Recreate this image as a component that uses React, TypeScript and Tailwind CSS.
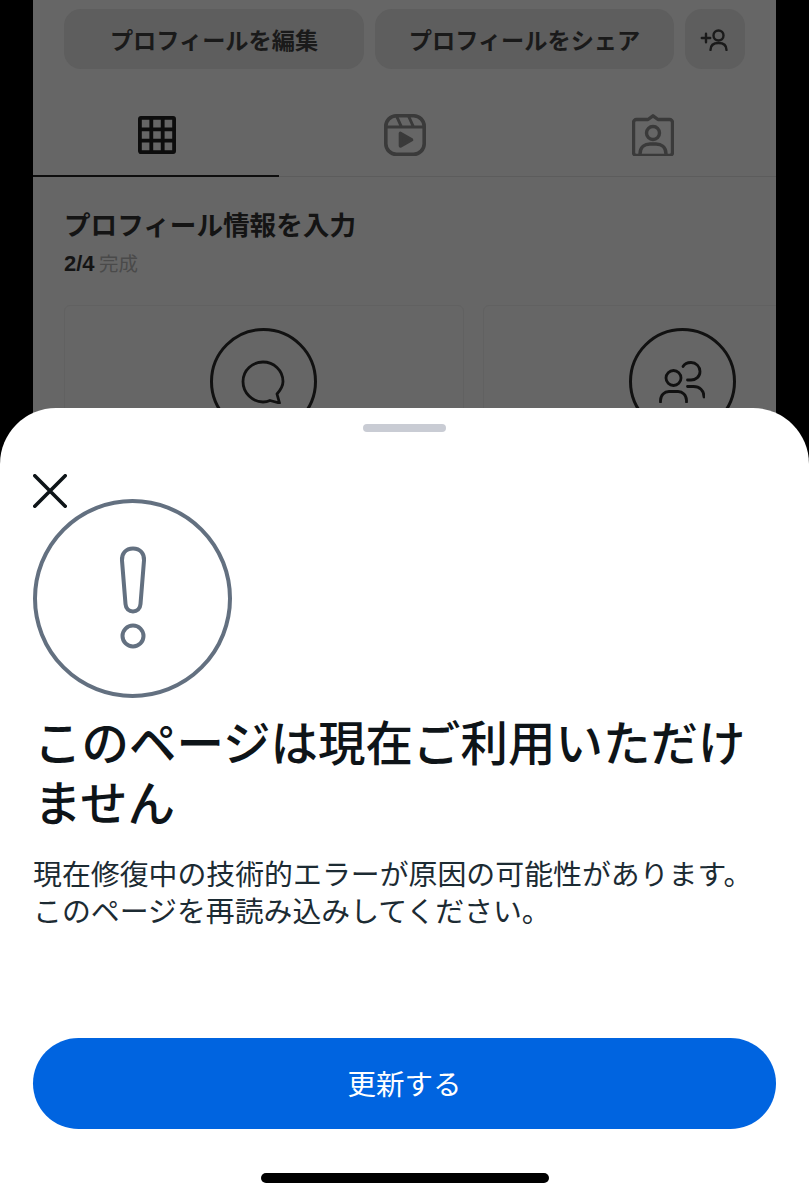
import React from 'react';

const jp = '[font-family:"Noto_Sans_CJK_JP","Liberation_Sans",sans-serif]';

const GridIcon = () => (
  <svg width="38" height="38" viewBox="0 0 38 38" fill="none" stroke="#0d0d0d" strokeWidth="3.8">
    <rect x="1.900" y="1.900" width="34.200" height="34.200" rx="1" />
    <path d="M13.300 1.900v34.200M24.700 1.900v34.200M1.900 13.300h34.200M1.900 24.700h34.200" />
  </svg>
);

const ReelIcon = () => (
  <svg width="42" height="42" viewBox="0 0 42 42" fill="none" stroke="#3a3a3a" strokeWidth="3.6" strokeLinejoin="round">
    <rect x="1.800" y="1.800" width="38.400" height="38.400" rx="10.500" />
    <path d="M2 13h38M12.500 2l5 11M24.500 2l5 11" strokeWidth="3" />
    <path d="M16.500 19.500v12.500l11-6.200z" fill="#3a3a3a" />
  </svg>
);

const TagIcon = () => (
  <svg width="42" height="42" viewBox="0 0 42 42" fill="none" stroke="#3a3a3a" strokeWidth="3.400" strokeLinejoin="round" strokeLinecap="round">
    <path d="M4.500 5.500h11.500L21 1.800l5 3.700h11.500a3 3 0 0 1 3 3v30a3 3 0 0 1-3 3h-33a3 3 0 0 1-3-3v-30a3 3 0 0 1 3-3z" />
    <circle cx="21" cy="19" r="6.500" />
    <path d="M8 40c0-7 5-10 10-10h6c5 0 10 3 10 10" />
  </svg>
);

const AddPersonIcon = () => (
  <svg width="30" height="24" viewBox="0 0 30 24" fill="none" stroke="#1a1a1a" strokeWidth="2.400" strokeLinecap="round">
    <path d="M1.800 11h8.400M6 6.800v8.400" />
    <circle cx="18.500" cy="8.500" r="5" />
    <path d="M10.500 23c0-4.500 3-7 8-7s8 2.500 8 7" />
  </svg>
);

const ChatIcon = () => (
  <svg width="44" height="44" viewBox="0 0 44 44" fill="none" stroke="#111" strokeWidth="2.800" strokeLinejoin="round">
    <path d="M22 2C11.500 2 2 10 2 21.500 2 33 11.500 42 22 42c3 0 5.500-.8 7-1.500l9.500 2.500-2.500-9C39.500 30 42 26 42 21.500 42 10 32.500 2 22 2z" />
  </svg>
);

const PeopleIcon = () => (
  <svg width="46" height="42" viewBox="0 0 46 42" fill="none" stroke="#111" strokeWidth="2.800" strokeLinecap="round">
    <circle cx="14.500" cy="17" r="7.500" />
    <path d="M1.500 41v-1.500c0-5.500 4-9 8.500-9h9c4.500 0 8.500 3.500 8.500 9V41" />
    <path d="M24 5.500C26 2 29 1.500 32 1.500c5 0 9 4 9 9s-4 8.500-9 8.500h-3.500" />
    <path d="M28.500 25.500h6c6 0 10.500 4 10.500 10.500" />
  </svg>
);

const CloseIcon = () => (
  <svg width="34" height="34" viewBox="0 0 34 34" fill="none" stroke="#0e1418" strokeWidth="3.600" strokeLinecap="round">
    <path d="M1.800 1.800l30.400 30.400M32.200 1.800L1.800 32.200" />
  </svg>
);

const AlertIcon = () => (
  <svg width="200" height="200" viewBox="0 0 200 200" fill="none" stroke="#637080" strokeWidth="4">
    <circle cx="99.500" cy="99.500" r="97.500" />
    <path d="M100 49.500c7.500 0 11.500 5.500 11 12l-3.500 43.500c-.4 5-3.500 7.500-7.500 7.500s-7.100-2.500-7.500-7.500l-3.500-43.500c-.5-6.500 3.500-12 11-12z" />
    <circle cx="100" cy="137" r="10.500" />
  </svg>
);

const ActionButton = ({ children, className }: { children: React.ReactNode; className: string }) => (
  <div className={`h-[60px] rounded-[17px] bg-[#5e5e5e] flex items-center justify-center text-[23.200px] font-bold text-[#1a1a1a] ${className}`}>
    {children}
  </div>
);

const TaskCard = ({ icon, className }: { icon: React.ReactNode; className: string }) => (
  <div className={`h-[200px] shrink-0 rounded-t-[6px] border border-[#616161] pt-[22px] pr-[2px] flex justify-center ${className}`}>
    <div className="w-[107px] h-[107px] rounded-full border-[3px] border-[#111] flex items-center justify-center">
      {icon}
    </div>
  </div>
);

export default function App() {
  return (
    <div className={`relative w-[809px] h-[1200px] overflow-hidden bg-black ${jp}`}>
      {/* dimmed profile page behind the sheet */}
      <div className="mx-[33px] w-[743px] h-[1200px] bg-[#666666] overflow-hidden">
        <div className="flex gap-[11px] pl-[31px] pt-[9px]">
          <ActionButton className="w-[300px]">プロフィールを編集</ActionButton>
          <ActionButton className="w-[299px]">プロフィールをシェア</ActionButton>
          <ActionButton className="w-[60px]"><AddPersonIcon /></ActionButton>
        </div>

        <div className="flex h-[108px] border-b border-[#5c5c5c]">
          <div className="relative w-[246px] flex items-center justify-center pl-[2px] pt-[24px]">
            <GridIcon />
            <div className="absolute left-0 right-0 -bottom-px h-[2px] bg-[#0d0d0d]" />
          </div>
          <div className="w-[250px] flex items-center justify-center pl-[2px] pt-[24px]"><ReelIcon /></div>
          <div className="w-[247px] flex items-center justify-center pt-[24px]"><TagIcon /></div>
        </div>

        <div className="pl-[31px] pt-[29px]">
          <h2 className="text-[26.600px] leading-[36px] font-bold text-[#141414]">プロフィール情報を入力</h2>
          <p className="mt-[8px] text-[19.500px] leading-[26px] text-[#4a4a4a]">
            <span className="font-bold text-[22px] text-[#141414] [font-family:'Liberation_Sans',sans-serif]">2/4</span> 完成
          </p>
          <div className="flex gap-[19px] mt-[28px]">
            <TaskCard className="w-[400px]" icon={<ChatIcon />} />
            <TaskCard className="w-[400px]" icon={<PeopleIcon />} />
          </div>
        </div>
      </div>

      {/* bottom sheet */}
      <div className="absolute left-0 right-0 top-[408px] bottom-0 bg-white rounded-t-[56px] px-[33px] flex flex-col">
        <div className="w-[83px] h-[8px] rounded-full bg-[#c9ccd4] mx-auto mt-[16px]" />
        <div className="mt-[42px] h-[25px]"><CloseIcon /></div>
        <AlertIcon />
        <h1 className="mt-[12px] pl-[1px] text-[47.500px] leading-[60px] font-medium text-[#0e1418]">
          このページは現在ご利用いただけません
        </h1>
        <p className="mt-[23px] text-[28.900px] leading-[37px] text-[#1c2b33]">
          現在修復中の技術的エラーが原因の可能性があります。<br />
          このページを再読み込みしてください。
        </p>
        <button className={`mt-auto h-[91px] rounded-[46px] bg-[#0064e0] text-white text-[28.500px] ${jp}`}>
          更新する
        </button>
        <div className="w-[288px] h-[10px] rounded-full bg-black mx-auto mt-[44px] mb-[17px]" />
      </div>
    </div>
  );
}
